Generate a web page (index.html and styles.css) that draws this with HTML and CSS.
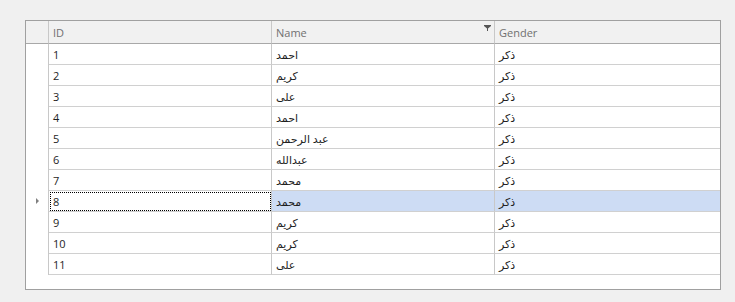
FILE: index.html
```html
<!DOCTYPE html>
<html lang="en">
<head>
    <meta charset="UTF-8">
    <title>Employees</title>
    <link rel="stylesheet" href="styles.css">
</head>
<body>

<div class="grid">
    <div class="row header">
        <div class="cell indicator"></div>
        <div class="cell">ID</div>
        <div class="cell">Name
            <svg class="filter" width="7" height="6" viewBox="0 0 7 6"><path d="M0 0H7V1L4 3.5V6H3V3.5L0 1Z" fill="#555"/></svg>
        </div>
        <div class="cell last">Gender</div>
    </div>
    <div class="row"><div class="cell indicator"></div><div class="cell">1</div><div class="cell">احمد</div><div class="cell last">ذكر</div></div>
    <div class="row"><div class="cell indicator"></div><div class="cell">2</div><div class="cell">كريم</div><div class="cell last">ذكر</div></div>
    <div class="row"><div class="cell indicator"></div><div class="cell">3</div><div class="cell">على</div><div class="cell last">ذكر</div></div>
    <div class="row"><div class="cell indicator"></div><div class="cell">4</div><div class="cell">احمد</div><div class="cell last">ذكر</div></div>
    <div class="row"><div class="cell indicator"></div><div class="cell">5</div><div class="cell">عبد الرحمن</div><div class="cell last">ذكر</div></div>
    <div class="row"><div class="cell indicator"></div><div class="cell">6</div><div class="cell">عبدالله</div><div class="cell last">ذكر</div></div>
    <div class="row"><div class="cell indicator"></div><div class="cell">7</div><div class="cell">محمد</div><div class="cell last">ذكر</div></div>
    <div class="row selected">
        <div class="cell indicator"><span class="arrow"></span></div>
        <div class="cell focused">8</div>
        <div class="cell">محمد</div>
        <div class="cell last">ذكر</div>
    </div>
    <div class="row"><div class="cell indicator"></div><div class="cell">9</div><div class="cell">كريم</div><div class="cell last">ذكر</div></div>
    <div class="row"><div class="cell indicator"></div><div class="cell">10</div><div class="cell">كريم</div><div class="cell last">ذكر</div></div>
    <div class="row"><div class="cell indicator"></div><div class="cell">11</div><div class="cell">على</div><div class="cell last">ذكر</div></div>
</div>

</body>
</html>
```

FILE: styles.css
```css
body {
    margin: 0;
    background-color: #f0f0f0;
    font-family: "Open Sans", "DejaVu Sans", sans-serif;
    font-size: 11px;
    color: #1e1e1e;
}
.grid {
    margin: 20px 0 0 25px;
    width: 694px;
    height: 268px;
    border: 1px solid #a0a0a0;
    background-color: #ffffff;
}
.row {
    display: grid;
    grid-template-columns: 23px 223px 223px 225px;
    height: 21px;
}
.cell {
    box-sizing: border-box;
    border-right: 1px solid #c8c8c8;
    border-bottom: 1px solid #d0d0d0;
    padding: 3px 0 0 4px;
    white-space: nowrap;
    position: relative;
}
.cell.last {
    border-right: none;
}
.cell.indicator {
    border-bottom: none;
    padding: 0;
}
.header {
    height: 23px;
    background-color: #f1f1f1;
    color: #707070;
}
.header .cell {
    border-bottom: 1px solid #a8a8a8;
    padding-top: 4px;
}
.header .cell.indicator {
    border-bottom: 1px solid #a8a8a8;
}
.filter {
    position: absolute;
    right: 3px;
    top: 4px;
}
.selected .cell {
    background-color: #cddcf4;
}
.selected .cell.indicator,
.selected .cell.focused {
    background-color: #ffffff;
}
.focused {
    outline: 1px dotted #000000;
    outline-offset: -2px;
}
.arrow {
    position: absolute;
    left: 10px;
    top: 7px;
    width: 0;
    height: 0;
    border-top: 3px solid transparent;
    border-bottom: 3px solid transparent;
    border-left: 3px solid #808080;
}
```
